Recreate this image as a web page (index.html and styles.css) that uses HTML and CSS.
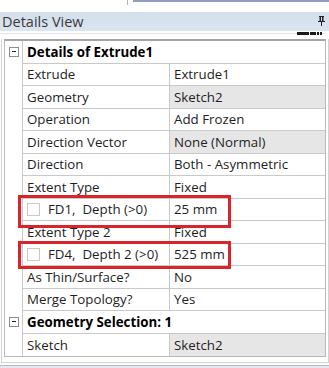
FILE: index.html
```html
<!DOCTYPE html>
<html lang="en">
<head>
  <meta charset="UTF-8" />
  <title>Details View</title>
  <link rel="stylesheet" href="styles.css">
</head>
<body>
  <div class="top-strip">
    <div class="strip-left"></div>
    <div class="strip-right"></div>
  </div>

  <div class="title-bar">
    <span>Details View</span>
    <svg class="pin" width="7" height="10" viewBox="0 0 7 10">
      <rect x="1" y="0" width="5" height="1" fill="#222" />
      <rect x="1.5" y="1" width="1.5" height="4" fill="#222" />
      <rect x="4" y="1" width="1.5" height="4" fill="#222" />
      <rect x="0" y="5" width="7" height="1" fill="#222" />
      <rect x="3" y="6" width="1" height="4" fill="#222" />
    </svg>
  </div>

  <div class="tool-row">
    <div class="tool-line"></div>
    <div class="tool-marks">
      <span class="mk w12"></span><span class="mk w6"></span><span class="mk w2"></span><span class="mk w2"></span>
    </div>
  </div>

  <div class="panel">
    <div class="props">
      <div class="row head">
        <span class="gutter"><span class="toggle"></span></span>
        <span class="cell label wide">Details of Extrude1</span>
      </div>
      <div class="row">
        <span class="gutter"></span>
        <span class="cell label">Extrude</span>
        <span class="cell value">Extrude1</span>
      </div>
      <div class="row">
        <span class="gutter"></span>
        <span class="cell label">Geometry</span>
        <span class="cell value grey">Sketch2</span>
      </div>
      <div class="row">
        <span class="gutter"></span>
        <span class="cell label">Operation</span>
        <span class="cell value">Add Frozen</span>
      </div>
      <div class="row">
        <span class="gutter"></span>
        <span class="cell label">Direction Vector</span>
        <span class="cell value grey">None (Normal)</span>
      </div>
      <div class="row">
        <span class="gutter"></span>
        <span class="cell label">Direction</span>
        <span class="cell value">Both - Asymmetric</span>
      </div>
      <div class="row">
        <span class="gutter"></span>
        <span class="cell label">Extent Type</span>
        <span class="cell value">Fixed</span>
      </div>
      <div class="row">
        <span class="gutter"></span>
        <span class="cell label"><span class="check"></span>FD1,&nbsp; Depth (&gt;0)</span>
        <span class="cell value">25 mm</span>
      </div>
      <div class="row">
        <span class="gutter"></span>
        <span class="cell label">Extent Type 2</span>
        <span class="cell value">Fixed</span>
      </div>
      <div class="row">
        <span class="gutter"></span>
        <span class="cell label"><span class="check"></span>FD4,&nbsp; Depth 2 (&gt;0)</span>
        <span class="cell value">525 mm</span>
      </div>
      <div class="row">
        <span class="gutter"></span>
        <span class="cell label">As Thin/Surface?</span>
        <span class="cell value">No</span>
      </div>
      <div class="row">
        <span class="gutter"></span>
        <span class="cell label">Merge Topology?</span>
        <span class="cell value">Yes</span>
      </div>
      <div class="row head">
        <span class="gutter"><span class="toggle"></span></span>
        <span class="cell label wide">Geometry Selection: 1</span>
      </div>
      <div class="row last">
        <span class="gutter"></span>
        <span class="cell label">Sketch</span>
        <span class="cell value grey">Sketch2</span>
      </div>

      <!-- highlight boxes drawn over the grid -->
      <div class="mark mark-fd1"></div>
      <div class="mark mark-fd4"></div>
    </div>
  </div>

  <div class="bottom-strip"></div>
</body>
</html>
```

FILE: styles.css
```css
html, body {
  margin: 0;
  padding: 0;
}
body {
  width: 329px;
  height: 368px;
  overflow: hidden;
  background-color: #ffffff;
  font-family: "Open Sans", "Noto Sans", sans-serif;
  font-size: 13.3px;
  color: #1e1e1e;
}
.top-strip {
  display: flex;
  height: 12px;
}
.strip-left {
  width: 127px;
  border-right: 1px solid #b4b4b4;
  height: 5px;
}
.strip-right {
  flex: 1;
  margin-left: 5px;
  border-top: 2px solid #8f9fc4;
}
.title-bar {
  display: flex;
  align-items: center;
  justify-content: space-between;
  height: 19px;
  padding: 0 4px 0 2px;
  background: linear-gradient(#d3dfec, #dbe5f0);
  font-size: 14.5px;
  color: #3a3a3a;
}
.pin {
  margin-top: -2px;
}
.tool-row {
  position: relative;
  height: 8px;
}
.tool-line {
  position: absolute;
  left: 0;
  right: 4px;
  top: 2px;
  border-top: 1px solid #e4e4e4;
}
.tool-marks {
  position: absolute;
  right: 7px;
  top: 1px;
  display: flex;
  gap: 1px;
}
.mk {
  display: block;
  height: 3px;
  background-color: #1a1a1a;
}
.w12 { width: 12px; }
.w6 { width: 6px; }
.w2 { width: 2px; }
.panel {
  border-left: 1px solid #d2d2d2;
  border-right: 1px solid #d2d2d2;
  border-bottom: 1px solid #d2d2d2;
  margin-left: 1px;
  padding: 0 1px 2px 2px;
  height: 321px;
}
.props {
  position: relative;
  border: 1px solid #b9b9b9;
  border-top: 2px solid #a5a5a5;
  width: 320px;
}
.row {
  display: grid;
  grid-template-columns: 17px 147px 1fr;
  height: 22.5px;
}
.gutter {
  display: flex;
  align-items: center;
  justify-content: center;
}
.cell {
  display: flex;
  align-items: center;
  border-left: 1px solid #c9c9c9;
  border-bottom: 1px solid #c9c9c9;
  white-space: nowrap;
  overflow: hidden;
}
.row.last .cell {
  border-bottom: none;
}
.label {
  padding-left: 4px;
}
.value {
  padding-left: 4px;
}
.wide {
  grid-column: 2 / 4;
  font-weight: bold;
  color: #000000;
}
.grey {
  background-color: #e6e6e6;
}
.toggle {
  position: relative;
  width: 8px;
  height: 8px;
  border: 1px solid #8c8c8c;
  background-color: #ffffff;
}
.toggle::after {
  content: "";
  position: absolute;
  left: 2px;
  right: 2px;
  top: 3px;
  height: 1px;
  background-color: #222;
}
.check {
  width: 11px;
  height: 11px;
  border: 1px solid #c8c8c8;
  margin-right: 8px;
  flex-shrink: 0;
}
.mark {
  position: absolute;
  left: 13px;
  width: 207px;
  border: 3px solid #d9242c;
}
.mark-fd1 {
  top: 154px;
  height: 27px;
}
.mark-fd4 {
  top: 200px;
  height: 22px;
}
.bottom-strip {
  height: 6px;
  margin-top: 2px;
  background-color: #e3e9f1;
  border-top: 1px solid #b9b9b9;
}
```
